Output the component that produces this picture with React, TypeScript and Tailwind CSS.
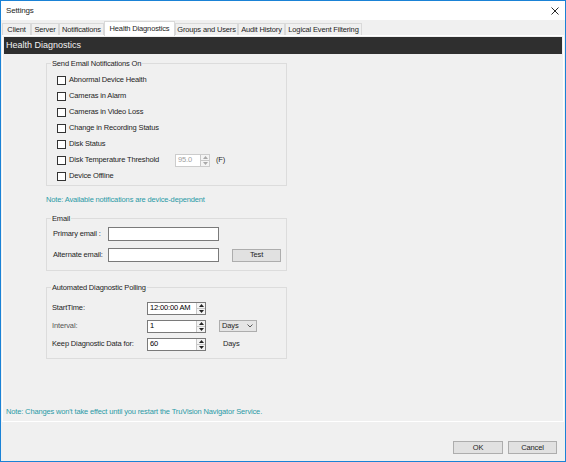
import React from "react";

const tabs = [
  { label: "Client", w: "w-[29px]" },
  { label: "Server", w: "w-[28px]" },
  { label: "Notifications", w: "w-[45px]" },
  { label: "Health Diagnostics", w: "w-[71px]", active: true },
  { label: "Groups and Users", w: "w-[63px]" },
  { label: "Audit History", w: "w-[47px]" },
  { label: "Logical Event Filtering", w: "w-[77px]" },
];

const checks = [
  "Abnormal Device Health",
  "Cameras in Alarm",
  "Cameras in Video Loss",
  "Change in Recording Status",
  "Disk Status",
  "Disk Temperature Threshold",
  "Device Offline",
];

function SpinArrows({ disabled }: { disabled?: boolean }) {
  const c = disabled ? "#a8a8a8" : "#222";
  return (
    <div className="w-[9px] h-full border-l border-[#c8c8c8] flex flex-col bg-[#f4f4f4]">
      <div className="flex-1 flex items-center justify-center border-b border-[#c8c8c8]">
        <svg width="5" height="3" viewBox="0 0 5 3">
          <path d="M2.5 0L5 3H0z" fill={c} />
        </svg>
      </div>
      <div className="flex-1 flex items-center justify-center">
        <svg width="5" height="3" viewBox="0 0 5 3">
          <path d="M0 0h5L2.5 3z" fill={c} />
        </svg>
      </div>
    </div>
  );
}

function Spinner({ value, w, disabled }: { value: string; w: string; disabled?: boolean }) {
  return (
    <div
      className={`${w} h-[13px] flex items-stretch border bg-white ${
        disabled ? "border-[#cccccc] text-[#a0a0a0]" : "border-[#7a7a7a] text-black"
      }`}
    >
      <div className="flex-1 flex items-center pl-[2px]">{value}</div>
      <SpinArrows disabled={disabled} />
    </div>
  );
}

function Group({ title, children, className }: { title: string; children: React.ReactNode; className?: string }) {
  return (
    <fieldset className={`w-[241px] border border-[#dcdcdc] ${className ?? ""}`}>
      <legend className="ml-[4px] px-[1px] leading-[9px]">{title}</legend>
      {children}
    </fieldset>
  );
}

export default function App() {
  return (
    <div className="w-[566px] h-[462px] bg-[#f0f0f0] border border-[#1a82d6] flex flex-col overflow-hidden font-['Liberation_Sans',Arial,sans-serif] text-[7.5px] tracking-[-0.15px] text-[#1e1e1e]">
      {/* title bar */}
      <div className="h-[19px] bg-white flex items-center justify-between pl-[5px] pr-[5px] shrink-0">
        <span className="text-[8px]">Settings</span>
        <svg width="8" height="8" viewBox="0 0 8 8" className="mr-[1px]">
          <path d="M0.5 0.5L7.5 7.5M7.5 0.5L0.5 7.5" stroke="#111" strokeWidth="0.9" />
        </svg>
      </div>

      {/* tabs */}
      <div className="h-[15px] flex items-end pl-[1px] shrink-0">
        {tabs.map((t) =>
          t.active ? (
            <div
              key={t.label}
              className={`${t.w} h-[15px] bg-white border border-b-0 border-[#d9d9d9] flex items-center justify-center relative z-10 -mb-[1px] pb-[1px]`}
            >
              {t.label}
            </div>
          ) : (
            <div
              key={t.label}
              className={`${t.w} h-[12px] border border-b-0 border-[#d9d9d9] flex items-center justify-center bg-[#f0f0f0]`}
            >
              {t.label}
            </div>
          )
        )}
      </div>

      {/* tab page */}
      <div className="mx-[1px] flex-1 border border-white p-[1px] flex flex-col">
        <div className="h-[17px] bg-[#2f2f2f] text-[#f2f2f2] text-[9px] tracking-normal flex items-center pl-[2px] shrink-0">
          Health Diagnostics
        </div>

        <div className="pl-[42px] flex flex-col">
          <Group title="Send Email Notifications On" className="mt-[5px]">
            <div className="pt-[4px] pb-[1px] pl-[10px] flex flex-col">
              {checks.map((c) => (
                <div key={c} className="h-[16px] flex items-center">
                  <div className="w-[9px] h-[9px] border border-[#333] bg-white shrink-0" />
                  {c === "Disk Temperature Threshold" ? (
                    <>
                      <span className="ml-[3px] w-[106px]">{c}</span>
                      <Spinner value="95.0" w="w-[35px]" disabled />
                      <span className="ml-[6px]">(F)</span>
                    </>
                  ) : (
                    <span className="ml-[3px]">{c}</span>
                  )}
                </div>
              ))}
            </div>
          </Group>

          <div className="mt-[9px] h-[10px] leading-[10px] text-[#2a9aa6]">
            Note: Available notifications are device-dependent
          </div>

          <Group title="Email" className="mt-[9px]">
            <div className="pt-[4px] pb-[8px] pl-[6px] flex flex-col gap-[7px]">
              <div className="flex items-center h-[14px]">
                <span className="w-[55px]">Primary email :</span>
                <div className="w-[111px] h-[14px] border border-[#7a7a7a] bg-white" />
              </div>
              <div className="flex items-center h-[14px]">
                <span className="w-[55px]">Alternate email:</span>
                <div className="w-[111px] h-[14px] border border-[#7a7a7a] bg-white" />
                <div className="ml-[13px] w-[49px] h-[13px] bg-[#e1e1e1] border border-[#adadad] flex items-center justify-center">
                  Test
                </div>
              </div>
            </div>
          </Group>

          <Group title="Automated Diagnostic Polling" className="mt-[12px]">
            <div className="pt-[9px] pb-[7px] pl-[5px] flex flex-col gap-[4px]">
              <div className="flex items-center h-[14px]">
                <span className="w-[95px]">StartTime:</span>
                <Spinner value="12:00:00 AM" w="w-[59px]" />
              </div>
              <div className="flex items-center h-[14px]">
                <span className="w-[95px] text-[#555]">Interval:</span>
                <Spinner value="1" w="w-[59px]" />
                <div className="ml-[13px] w-[38px] h-[12px] bg-[#e5e5e5] border border-[#adadad] flex items-center justify-between pl-[2px] pr-[3px]">
                  <span>Days</span>
                  <svg width="6" height="4" viewBox="0 0 6 4">
                    <path d="M0.5 0.5L3 3L5.5 0.5" stroke="#333" strokeWidth="0.8" fill="none" />
                  </svg>
                </div>
              </div>
              <div className="flex items-center h-[14px]">
                <span className="w-[95px]">Keep Diagnostic Data for:</span>
                <Spinner value="60" w="w-[59px]" />
                <span className="ml-[17px]">Days</span>
              </div>
            </div>
          </Group>
        </div>

        <div className="flex-1" />
        <div className="pl-[2px] pb-[3px] h-[13px] leading-[10px] text-[#2a9aa6]">
          Note: Changes won't take effect until you restart the TruVision Navigator Service.
        </div>
      </div>

      {/* footer */}
      <div className="h-[39px] shrink-0 flex items-start justify-end pt-[19px] pr-[8px] gap-[5px]">
        <div className="w-[50px] h-[13px] bg-[#e1e1e1] border border-[#adadad] flex items-center justify-center">
          OK
        </div>
        <div className="w-[49px] h-[13px] bg-[#e1e1e1] border border-[#adadad] flex items-center justify-center">
          Cancel
        </div>
      </div>
    </div>
  );
}
